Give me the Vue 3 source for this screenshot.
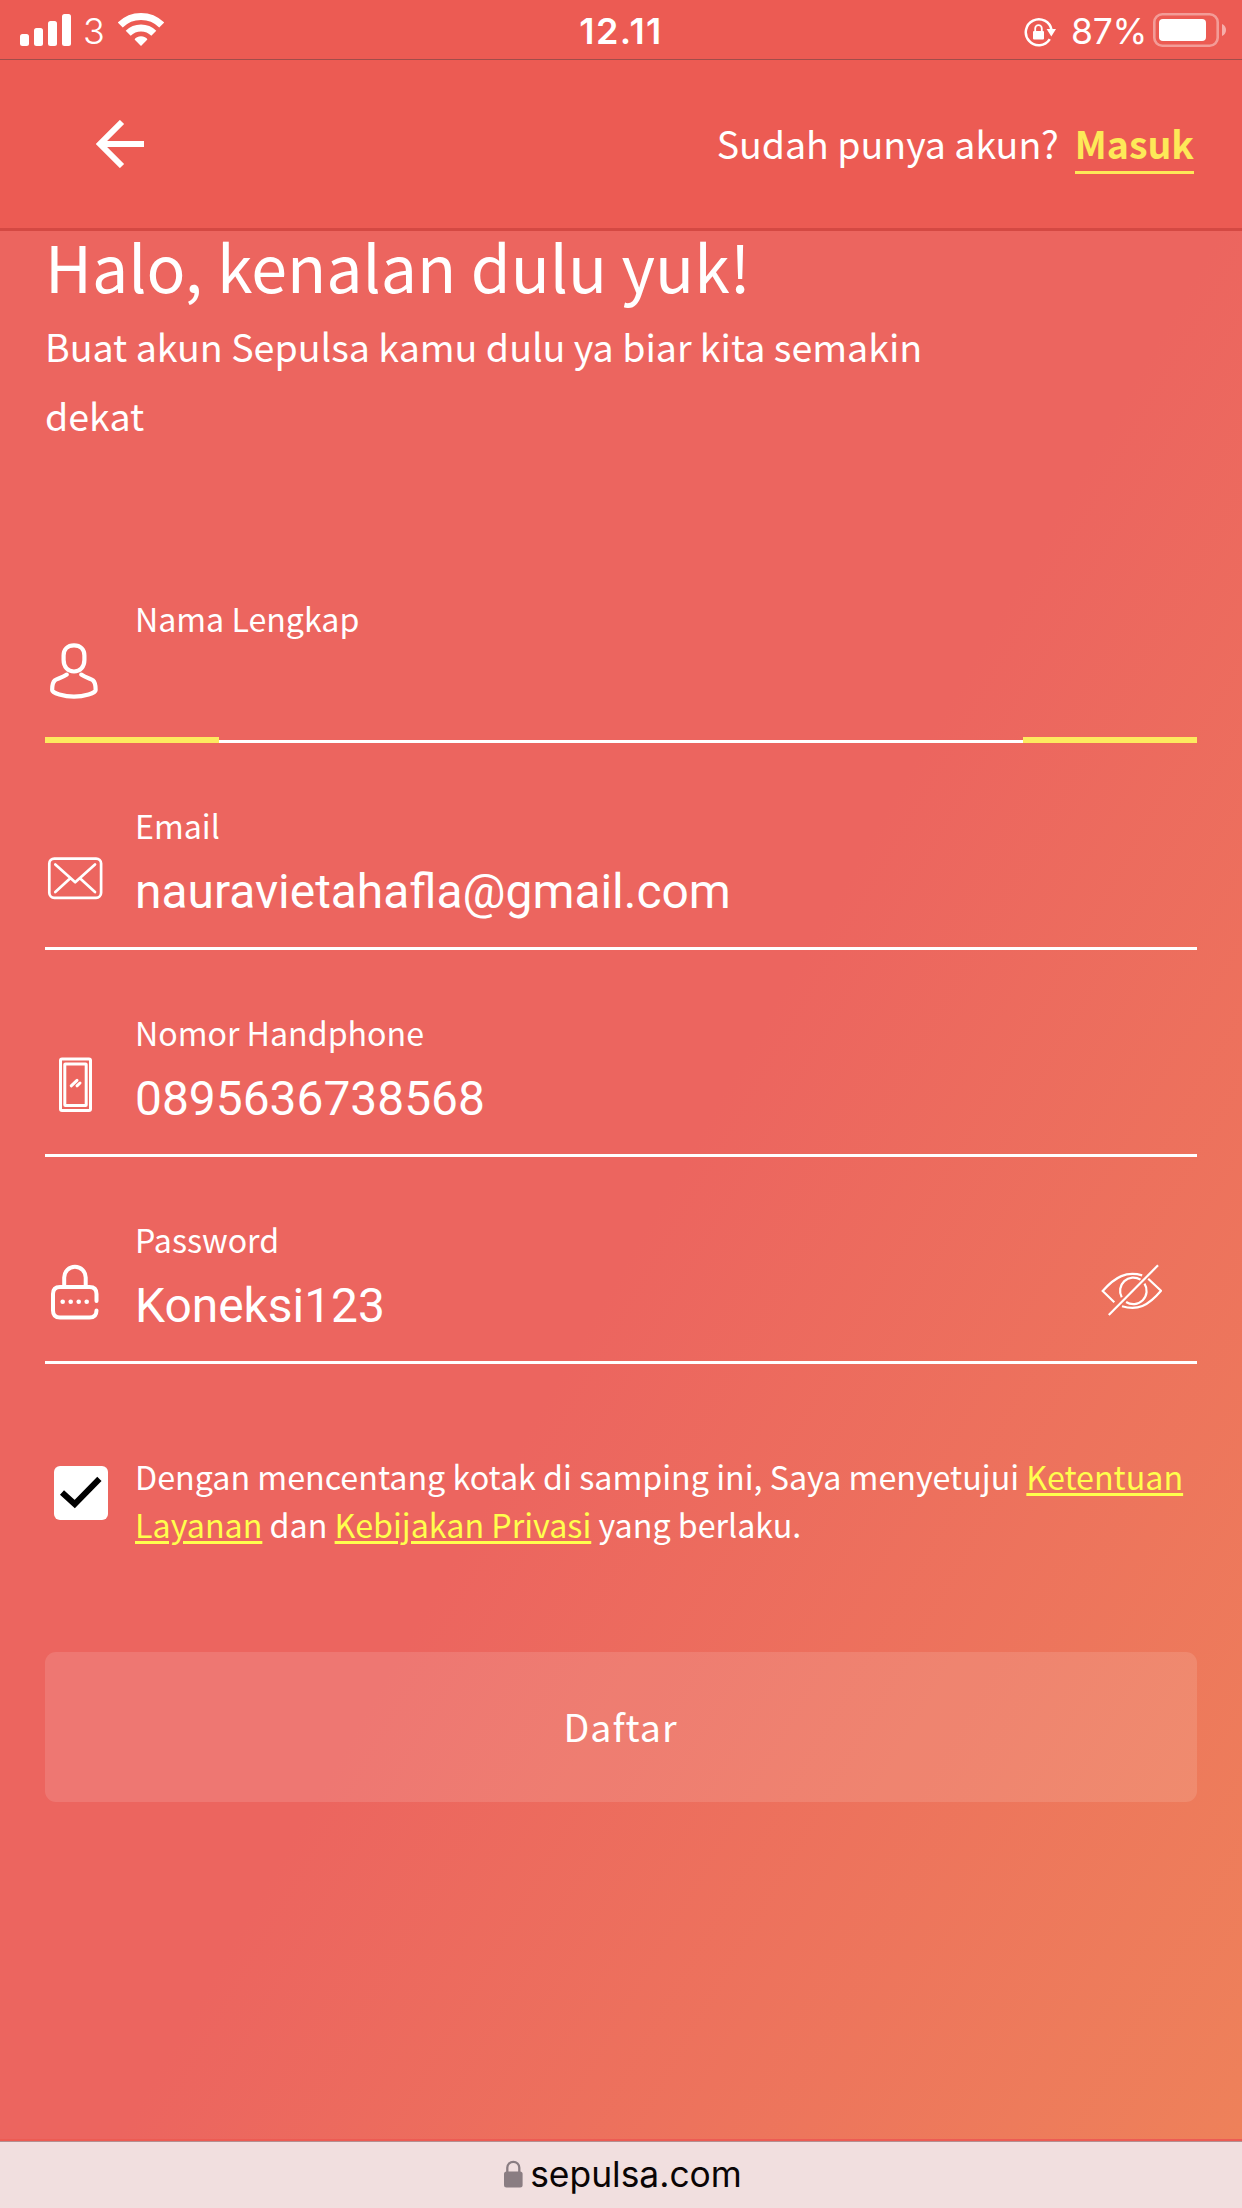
<script setup>
import { ref } from 'vue'

const fields = ref([
  { id: 'name', label: 'Nama Lengkap', value: '', active: true },
  { id: 'email', label: 'Email', value: 'nauravietahafla@gmail.com' },
  { id: 'phone', label: 'Nomor Handphone', value: '0895636738568' },
  { id: 'password', label: 'Password', value: 'Koneksi123' },
])
</script>

<template>
  <div class="screen">
    <div class="status">
      <div class="status-left">
        <svg class="signal" width="51" height="32" viewBox="0 0 51 32" fill="#fff">
          <rect x="0" y="20" width="9" height="12" rx="2.5" />
          <rect x="14" y="14" width="9" height="18" rx="2.5" />
          <rect x="28" y="7" width="9" height="25" rx="2.5" />
          <rect x="42" y="0" width="9" height="32" rx="2.5" />
        </svg>
        <span class="carrier">3</span>
        <svg class="wifi" width="46" height="33" viewBox="0 0 46 33" fill="none" stroke="#fff">
          <path d="M2.3 12 A29.5 29.5 0 0 1 43.7 12" stroke-width="7" />
          <path d="M10.2 20.3 A18 18 0 0 1 35.8 20.3" stroke-width="7" />
          <path d="M23 33 L16.6 26.5 Q17 25.2 19 24.2 Q23 22.3 27 24.2 Q29 25.2 29.4 26.5 Z" fill="#fff" stroke="none" />
        </svg>
      </div>
      <span class="time">12.11</span>
      <div class="status-right">
        <svg width="32" height="32" viewBox="0 0 32 32" fill="none">
          <path d="M25.8 23.2 A13 13 0 1 1 27.6 14" stroke="#fff" stroke-width="2.5" />
          <path d="M22.6 13 H32 L27.3 20.4 Z" fill="#fff" />
          <rect x="9" y="15" width="11" height="8.6" rx="1" fill="#fff" />
          <path d="M11.2 15.5 V12.5 A3.3 3.3 0 0 1 17.8 12.5 V15.5" stroke="#fff" stroke-width="1.8" />
        </svg>
        <span class="percent">87%</span>
        <svg class="battery" width="74" height="34" viewBox="0 0 74 34" fill="none">
          <rect x="1.3" y="1.3" width="63.4" height="31.4" rx="8" stroke="#fff" stroke-opacity=".4" stroke-width="2.6" />
          <rect x="6" y="6" width="47" height="22" rx="4" fill="#fff" />
          <path d="M69 11 C74.4 13 74.4 21 69 23 Z" fill="#fff" fill-opacity=".5" />
        </svg>
      </div>
    </div>

    <header class="header">
      <svg width="48" height="48" viewBox="0 0 48 48" fill="none" stroke="#fff" stroke-width="6">
        <path d="M26 2 L4 24 L26 46 M5 24 H48" />
      </svg>
      <div class="login"><span>Sudah punya akun?</span><a>Masuk</a></div>
    </header>

    <main class="content">
      <h1>Halo, kenalan dulu yuk!</h1>
      <p class="intro">Buat akun Sepulsa kamu dulu ya biar kita semakin dekat</p>

      <form>
        <div v-for="f in fields" :key="f.id" class="field" :class="{ active: f.active }">
          <svg class="icon" width="90" height="204" viewBox="0 0 90 204" fill="none" stroke="#fff" stroke-linecap="round" stroke-linejoin="round">
            <g v-if="f.id === 'name'" stroke-width="4.2">
              <path d="M29 109.4 C35.5 109.4 39.4 113.5 39.4 119.5 V124 C39.4 131 35 135.5 29 135.5 C23 135.5 18.6 131 18.6 124 V119.5 C18.6 113.5 22.5 109.4 29 109.4 Z" />
              <path d="M21.8 138.6 C16 142.4 12 142.6 9.8 144.4 C7 147 7.2 151 7.2 154.2 C7.2 157 19 160.6 29 160.6 C39 160.6 50.6 157 50.6 154.2 C50.6 151 50.8 147 48 144.4 C45.8 142.6 42 142.4 36.2 138.6" />
            </g>
            <g v-else-if="f.id === 'email'" stroke-width="2.7">
              <rect x="4.3" y="115.6" width="51.8" height="39.2" rx="5" />
              <path d="M10.3 121.5 L30.2 139.3 L50 121.5 M10.3 149 L25 135.5 M50 149 L35.2 135.5" />
            </g>
            <g v-else-if="f.id === 'phone'" stroke-width="3">
              <rect x="15.5" y="109" width="30" height="51.6" rx="1.5" />
              <rect x="19.8" y="114" width="21.4" height="41.4" rx=".5" />
              <path d="M26.2 135.8 L32 130.3 M32 135.8 L35 133" />
            </g>
            <g v-else stroke-width="4">
              <path d="M51.5 144 V137 Q51.5 130 44.5 130 H15 Q8 130 8 137 V153.4 Q8 160.4 15 160.4 H44.5 Q51.5 160.4 51.5 153.4" />
              <path d="M19.2 129 V120.5 A10.7 10.7 0 0 1 40.7 120.5 V129" />
              <g fill="#fff" stroke="none">
                <circle v-for="n in 4" :key="n" :cx="9.7 + n * 8" cy="144.7" r="2.3" />
              </g>
            </g>
          </svg>
          <div class="entry">
            <label>{{ f.label }}</label>
            <div class="value">{{ f.value }}</div>
          </div>
          <svg v-if="f.id === 'password'" class="eye" width="61" height="52" viewBox="1101 1264 60 52" fill="none" stroke="#fff" stroke-width="2.2">
            <path d="M1108.3 1315 L1157.5 1265.3" />
            <path d="M1141.7 1275.4 C1126 1271 1115 1276.5 1102.2 1291 L1113.8 1302.2" />
            <path d="M1147.7 1278.7 L1160.5 1290.7 C1147.5 1306 1137 1310.8 1121.5 1306.2" />
            <path d="M1121.2 1297.2 A13.3 13.3 0 0 1 1140 1279.6 M1144 1283.6 A13.3 13.3 0 0 1 1125.6 1302" />
          </svg>
        </div>

        <div class="terms">
          <div class="box">
            <svg width="54" height="54" viewBox="0 0 54 54" fill="none" stroke="#000" stroke-width="6">
              <path d="M8 26.5 L20.7 38 L45.4 12.8" />
            </svg>
          </div>
          <p>Dengan mencentang kotak di samping ini, Saya menyetujui <a>Ketentuan Layanan</a> dan <a>Kebijakan Privasi</a> yang berlaku.</p>
        </div>

        <button type="button">Daftar</button>
      </form>
    </main>

    <footer class="urlbar">
      <svg width="19" height="28" viewBox="0 0 19 28" fill="none">
        <rect x="0" y="11.5" width="18.6" height="16" rx="2.5" fill="#8a7d82" />
        <path d="M3.3 12 V7.8 A6 6 0 0 1 15.3 7.8 V12" stroke="#8a7d82" stroke-width="2.3" />
      </svg>
      <span>sepulsa.com</span>
    </footer>
  </div>
</template>

<style>
body { margin: 0; }
</style>

<style scoped>
.screen {
  width: 1242px;
  height: 2208px;
  display: flex;
  flex-direction: column;
  overflow: hidden;
  color: #fff;
  font-family: "Noto Sans CJK SC", sans-serif;
}
.status {
  box-sizing: border-box;
  height: 60px;
  flex: none;
  display: grid;
  grid-template-columns: 1fr auto 1fr;
  align-items: start;
  padding: 0 15px;
  background: #ec5b53;
  border-bottom: 1px solid #a04d4a;
  font-family: Inter, sans-serif;
  font-size: 36px;
  line-height: 62px;
}
.status-left, .status-right { display: flex; align-items: flex-start; }
.status-left { padding-left: 5px; }
.status-right { justify-content: flex-end; }
.signal { margin-top: 14px; }
.carrier { width: 22px; margin-left: 12px; font-weight: 300; }
.wifi { margin: 13px 0 0 13px; }
.time { font-weight: 600; letter-spacing: 1.4px; }
.status-right svg:first-child { margin-top: 16px; }
.percent { margin: 0 6px 0 15px; font-weight: 400; font-size: 35.5px; line-height: 64px; letter-spacing: -.3px; }
.battery { margin-top: 13px; }
.header {
  height: 168px;
  flex: none;
  display: flex;
  align-items: center;
  justify-content: space-between;
  padding: 0 48px 0 96px;
  background: #ec5b53;
  border-bottom: 3px solid #d44943;
}
.login { display: flex; gap: 16px; font-size: 37.5px; line-height: 56px; padding-top: 1px; }
.login a { font-weight: 700; color: #fde958; border-bottom: 3px solid #fde958; }
.content {
  flex: 1;
  padding: 0 45px;
  background: linear-gradient(120deg, #ec655f 52%, #ee815a);
  border-bottom: 2px solid #ec5b53;
}
h1 { margin: 0; font-size: 64.4px; line-height: 68px; font-weight: 400; }
.intro { width: 930px; height: 138px; margin: 12px 0 87px; font-size: 37.6px; line-height: 69px; }
.field {
  position: relative;
  display: flex;
  height: 204px;
  border-bottom: 3px solid #fff;
}
.field.active::before, .field.active::after {
  content: "";
  position: absolute;
  bottom: -3px;
  left: 0;
  width: 174px;
  height: 6px;
  background: #fdea5f;
}
.field.active::after { left: auto; right: 0; }
.icon { flex: none; }
.entry { flex: 1; padding-top: 62px; }
label { display: block; font-size: 32.15px; line-height: 40px; }
.value { margin-top: 19px; font: 400 47.9px/56px Roboto, sans-serif; white-space: nowrap; }
.eye { margin: 107px 35px 0 0; }
.terms { display: flex; margin-top: 88px; }
.box {
  flex: none;
  width: 54px;
  height: 54px;
  margin: 14px 27px 0 9px;
  border-radius: 6px;
  background: #fff;
}
.terms p { margin: 0; font-size: 32.24px; line-height: 48px; }
.terms a {
  color: #ffff4d;
  text-decoration: underline;
  text-decoration-thickness: 2.5px;
  text-underline-offset: 3px;
}
button {
  display: block;
  width: 100%;
  height: 150px;
  margin-top: 104px;
  padding: 0 1px 3px 0;
  border: 0;
  border-radius: 11px;
  background: rgba(255, 255, 255, .12);
  color: #fff;
  font: inherit;
  font-size: 37.6px;
  letter-spacing: 1px;
}
.urlbar {
  height: 66px;
  flex: none;
  display: flex;
  justify-content: center;
  gap: 7px;
  padding-left: 4px;
  border-top: 1px solid #b58f90;
  background: #f1dfdf;
  color: #0a0505;
  font: 400 35.4px/66px Inter, sans-serif;
}
.urlbar svg { margin-top: 18px; }
</style>
